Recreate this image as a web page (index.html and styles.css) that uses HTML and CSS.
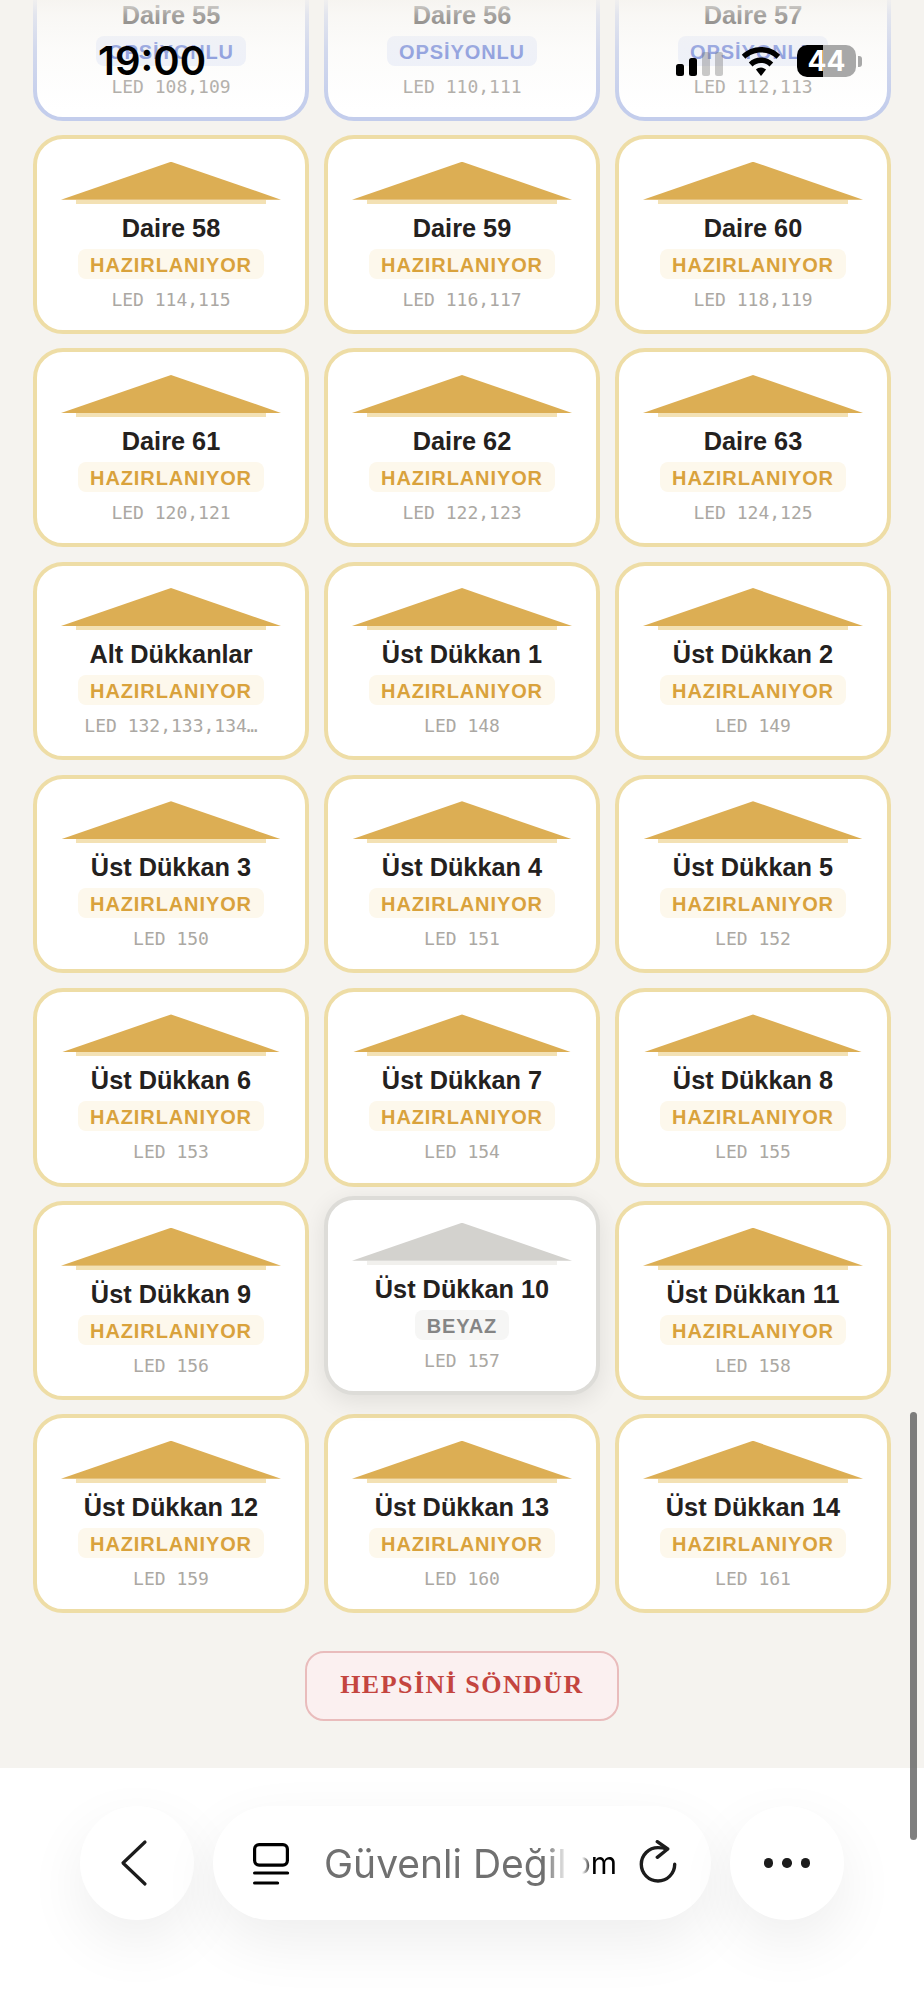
FILE: index.html
```html
<!DOCTYPE html>
<html lang="en">
<head>
  <meta charset="UTF-8">
  <title>Daire Kontrol</title>
  <link rel="stylesheet" href="styles.css">
</head>
<body>
  <main class="page">
    <div class="grid">
      <div class="card optional"><div class="roof"></div><div class="name">Daire 55</div><div class="badge">OPSİYONLU</div><div class="led">LED 108,109</div></div>
      <div class="card optional"><div class="roof"></div><div class="name">Daire 56</div><div class="badge">OPSİYONLU</div><div class="led">LED 110,111</div></div>
      <div class="card optional"><div class="roof"></div><div class="name">Daire 57</div><div class="badge">OPSİYONLU</div><div class="led">LED 112,113</div></div>

      <div class="card"><div class="roof"></div><div class="name">Daire 58</div><div class="badge">HAZIRLANIYOR</div><div class="led">LED 114,115</div></div>
      <div class="card"><div class="roof"></div><div class="name">Daire 59</div><div class="badge">HAZIRLANIYOR</div><div class="led">LED 116,117</div></div>
      <div class="card"><div class="roof"></div><div class="name">Daire 60</div><div class="badge">HAZIRLANIYOR</div><div class="led">LED 118,119</div></div>

      <div class="card"><div class="roof"></div><div class="name">Daire 61</div><div class="badge">HAZIRLANIYOR</div><div class="led">LED 120,121</div></div>
      <div class="card"><div class="roof"></div><div class="name">Daire 62</div><div class="badge">HAZIRLANIYOR</div><div class="led">LED 122,123</div></div>
      <div class="card"><div class="roof"></div><div class="name">Daire 63</div><div class="badge">HAZIRLANIYOR</div><div class="led">LED 124,125</div></div>

      <div class="card"><div class="roof"></div><div class="name">Alt Dükkanlar</div><div class="badge">HAZIRLANIYOR</div><div class="led">LED 132,133,134…</div></div>
      <div class="card"><div class="roof"></div><div class="name">Üst Dükkan 1</div><div class="badge">HAZIRLANIYOR</div><div class="led">LED 148</div></div>
      <div class="card"><div class="roof"></div><div class="name">Üst Dükkan 2</div><div class="badge">HAZIRLANIYOR</div><div class="led">LED 149</div></div>

      <div class="card"><div class="roof"></div><div class="name">Üst Dükkan 3</div><div class="badge">HAZIRLANIYOR</div><div class="led">LED 150</div></div>
      <div class="card"><div class="roof"></div><div class="name">Üst Dükkan 4</div><div class="badge">HAZIRLANIYOR</div><div class="led">LED 151</div></div>
      <div class="card"><div class="roof"></div><div class="name">Üst Dükkan 5</div><div class="badge">HAZIRLANIYOR</div><div class="led">LED 152</div></div>

      <div class="card"><div class="roof"></div><div class="name">Üst Dükkan 6</div><div class="badge">HAZIRLANIYOR</div><div class="led">LED 153</div></div>
      <div class="card"><div class="roof"></div><div class="name">Üst Dükkan 7</div><div class="badge">HAZIRLANIYOR</div><div class="led">LED 154</div></div>
      <div class="card"><div class="roof"></div><div class="name">Üst Dükkan 8</div><div class="badge">HAZIRLANIYOR</div><div class="led">LED 155</div></div>

      <div class="card"><div class="roof"></div><div class="name">Üst Dükkan 9</div><div class="badge">HAZIRLANIYOR</div><div class="led">LED 156</div></div>
      <div class="card white"><div class="roof"></div><div class="name">Üst Dükkan 10</div><div class="badge">BEYAZ</div><div class="led">LED 157</div></div>
      <div class="card"><div class="roof"></div><div class="name">Üst Dükkan 11</div><div class="badge">HAZIRLANIYOR</div><div class="led">LED 158</div></div>

      <div class="card"><div class="roof"></div><div class="name">Üst Dükkan 12</div><div class="badge">HAZIRLANIYOR</div><div class="led">LED 159</div></div>
      <div class="card"><div class="roof"></div><div class="name">Üst Dükkan 13</div><div class="badge">HAZIRLANIYOR</div><div class="led">LED 160</div></div>
      <div class="card"><div class="roof"></div><div class="name">Üst Dükkan 14</div><div class="badge">HAZIRLANIYOR</div><div class="led">LED 161</div></div>
    </div>

    <button class="all-off">HEPSİNİ SÖNDÜR</button>
  </main>

  <nav class="browser-bar">
    <div class="round-btn">
      <svg class="back-icon" width="40" height="50" viewBox="0 0 40 50"><path d="M30 4 8 25l22 21" fill="none" stroke="#1c1c1c" stroke-width="3.2" stroke-linecap="round" stroke-linejoin="round"/></svg>
    </div>
    <div class="url-pill">
      <svg class="tabs-icon" width="38" height="46" viewBox="0 0 38 46">
        <rect x="2.6" y="2.6" width="32.8" height="20.5" rx="4.5" fill="none" stroke="#000" stroke-width="3.2"/>
        <path d="M2.6 31h33M2.6 41h23" fill="none" stroke="#000" stroke-width="3.2" stroke-linecap="round"/>
      </svg>
      <span class="url-text">Güvenli Değil</span>
      <span class="url-host">om</span>
      <svg class="reload-icon" width="38" height="44" viewBox="0 0 38 44">
        <path d="M28 9.200C25.500 8.200 22.500 7.600 19 7.600A16.700 16.700 0 1 0 35.700 24.300" fill="none" stroke="#1c1c1c" stroke-width="3.400" stroke-linecap="round"/>
        <path d="M18.300 1.700 28.700 9 18.300 17.300" fill="none" stroke="#1c1c1c" stroke-width="3.400" stroke-linecap="round" stroke-linejoin="round"/>
      </svg>
    </div>
    <div class="round-btn dots">
      <span></span><span></span><span></span>
    </div>
  </nav>

  <div class="top-fade"></div>

  <div class="status-bar">
    <span class="clock">19:00</span>
    <div class="status-icons">
      <div class="signal">
        <span class="bar b1"></span><span class="bar b2"></span><span class="bar b3 off"></span><span class="bar b4 off"></span>
      </div>
      <svg class="wifi" width="40" height="30" viewBox="0 0 40 30">
        <path d="M20 0C12.500 0 5.800 3 .8 7.800l3.600 4C8.400 8 13.900 5.600 20 5.600S31.600 8 35.600 11.800l3.600-4C34.200 3 27.500 0 20 0z"/>
        <path d="M20 10.500c-4.700 0-9 1.900-12.200 4.900l3.700 4c2.200-2.100 5.200-3.400 8.500-3.400s6.300 1.300 8.500 3.400l3.700-4C29 12.400 24.700 10.500 20 10.500z"/>
        <path d="M20 20.600c-2 0-3.800.8-5.100 2L20 29l5.100-6.400c-1.300-1.200-3.100-2-5.100-2z"/>
      </svg>
      <div class="battery"><span class="battery-text">44</span></div>
      <span class="battery-nub"></span>
    </div>
  </div>

  <div class="scroll-thumb"></div>
</body>
</html>
```

FILE: styles.css
```css
* {
  box-sizing: border-box;
}
body {
  margin: 0;
  height: 2000px;
  overflow: hidden;
  position: relative;
  display: flex;
  flex-direction: column;
  background-color: #f5f3ef;
  font-family: "Liberation Sans", Arial, sans-serif;
}
.page {
  height: 1768px;
  overflow: hidden;
  display: flex;
  flex-direction: column;
  align-items: center;
  flex: none;
}

/* cards */
.grid {
  margin-top: -77.9px;
  width: 858px;
  display: grid;
  grid-template-columns: repeat(3, 276px);
  grid-auto-rows: 198.5px;
  gap: 14.7px 15px;
}
.card {
  background-color: #fff;
  border: 4.6px solid #eedda6;
  border-radius: 30px;
  padding-top: 22.400px;
  display: flex;
  flex-direction: column;
  align-items: center;
}
.roof {
  position: relative;
  width: 220px;
  height: 42px;
  flex: none;
}
.roof::before {
  content: "";
  position: absolute;
  left: 0;
  top: 0;
  width: 220px;
  height: 38px;
  background-color: #dcae54;
  clip-path: polygon(50% 0, 100% 100%, 0 100%);
}
.roof::after {
  content: "";
  position: absolute;
  left: 15px;
  top: 38px;
  width: 190px;
  height: 4px;
  background-color: #f3e1b4;
}
.name {
  margin-top: 9px;
  font-size: 25.3px;
  line-height: 30px;
  font-weight: bold;
  color: #24211e;
  white-space: nowrap;
}
.badge {
  margin-top: 6px;
  height: 30px;
  padding: 0 12px;
  border-radius: 8px;
  background-color: #fdf8ec;
  color: #d9a23c;
  font-size: 20px;
  line-height: 32px;
  font-weight: bold;
  letter-spacing: 0.9px;
  white-space: nowrap;
}
.led {
  margin-top: 10px;
  font-family: "DejaVu Sans Mono", monospace;
  font-size: 18px;
  line-height: 22px;
  color: #aba8a3;
  white-space: nowrap;
}
.card.optional {
  border-color: #c3cdec;
}
.card.optional .badge {
  background-color: #ecf0fb;
  color: #6f85d8;
}
.card.white {
  border-color: #dddcd8;
  transform: translateY(-5px);
  box-shadow: 0 6px 24px rgba(0, 0, 0, 0.09);
}
.card.white .roof::before {
  background-color: #d3d2ce;
}
.card.white .roof::after {
  background-color: #f1f0ed;
}
.card.white .badge {
  background-color: #f6f6f5;
  color: #858585;
}

.all-off {
  margin-top: 38.5px;
  width: 314px;
  height: 70px;
  flex: none;
  padding: 0 0 2px;
  background-color: #fbf0f0;
  border: 2.5px solid #e9bcbc;
  border-radius: 19px;
  color: #c4453f;
  font-family: "Liberation Serif", "Times New Roman", serif;
  font-size: 26px;
  font-weight: bold;
  letter-spacing: 1.46px;
}

/* browser toolbar */
.browser-bar {
  flex: 1;
  background-color: #fff;
  display: flex;
  justify-content: center;
  gap: 19px;
  padding-top: 38px;
}
.round-btn {
  width: 114px;
  height: 114px;
  border-radius: 50%;
  background-color: #fff;
  box-shadow: 0 22px 60px rgba(0, 0, 0, 0.07);
  display: flex;
  align-items: center;
  justify-content: center;
}
.back-icon {
  margin-right: 4px;
}
.dots {
  gap: 9px;
}
.dots span {
  width: 9.500px;
  height: 9.500px;
  border-radius: 50%;
  background-color: #1c1c1c;
}
.url-pill {
  width: 498px;
  height: 114px;
  border-radius: 57px;
  background-color: #fff;
  box-shadow: 0 22px 60px rgba(0, 0, 0, 0.07);
  display: flex;
  align-items: center;
  padding-left: 39px;
}
.tabs-icon {
  flex: none;
  margin-top: 3px;
}
.url-text {
  margin-left: 34px;
  width: 240px;
  flex: none;
  overflow: hidden;
  white-space: nowrap;
  font-family: Inter, "Liberation Sans", sans-serif;
  font-size: 39px;
  color: #707070;
  -webkit-mask-image: linear-gradient(to right, #000 92%, rgba(0, 0, 0, 0.2) 100%);
  mask-image: linear-gradient(to right, #000 92%, rgba(0, 0, 0, 0.2) 100%);
}
.url-host {
  margin-left: 18px;
  width: 35px;
  flex: none;
  overflow: hidden;
  direction: rtl;
  font-family: Inter, "Liberation Sans", sans-serif;
  font-size: 30px;
  color: #000;
  -webkit-mask-image: linear-gradient(to right, transparent 0, #000 30%);
  mask-image: linear-gradient(to right, transparent 0, #000 30%);
}
.reload-icon {
  flex: none;
  margin-left: 22px;
  margin-bottom: 2px;
}

/* things that lie over the page */
.top-fade {
  position: absolute;
  left: 0;
  top: 0;
  width: 100%;
  height: 110px;
  background: linear-gradient(to bottom, rgba(245, 243, 239, 0.9) 0, rgba(245, 243, 239, 0.62) 15px, rgba(245, 243, 239, 0.3) 50px, rgba(245, 243, 239, 0) 100%);
}
.status-bar {
  position: absolute;
  left: 0;
  top: 0;
  width: 100%;
  height: 100px;
}
.clock {
  position: absolute;
  left: 98px;
  top: 38px;
  font-family: Inter, "Liberation Sans", sans-serif;
  font-size: 40px;
  line-height: 46px;
  font-weight: 600;
  color: #000;
}
.status-icons {
  position: absolute;
  left: 676px;
  top: 45px;
  display: flex;
  align-items: flex-end;
  height: 32px;
}
.signal {
  display: flex;
  align-items: flex-end;
  gap: 5px;
  height: 31px;
  margin-bottom: 1px;
}
.bar {
  width: 8px;
  border-radius: 2.5px;
  background-color: #000;
}
.bar.off {
  background-color: rgba(120, 120, 120, 0.4);
}
.b1 { height: 12px; }
.b2 { height: 18px; }
.b3 { height: 24px; }
.b4 { height: 24px; }
.wifi {
  margin-left: 18px;
}
.battery {
  margin-left: 16px;
  width: 59px;
  height: 32px;
  border-radius: 10px;
  background: linear-gradient(to right, #000 44%, #a8a8a8 44%);
  display: flex;
  align-items: center;
  justify-content: center;
}
.battery-text {
  font-family: Inter, "Liberation Sans", sans-serif;
  font-size: 28px;
  font-weight: 700;
  color: #fff;
}
.battery-nub {
  margin-left: 2px;
  margin-bottom: 10px;
  width: 4px;
  height: 11px;
  border-radius: 0 3px 3px 0;
  background-color: #a8a8a8;
}
.scroll-thumb {
  position: absolute;
  left: 910px;
  top: 1412px;
  width: 7px;
  height: 428px;
  border-radius: 4px;
  background-color: rgba(95, 95, 95, 0.8);
}
```
